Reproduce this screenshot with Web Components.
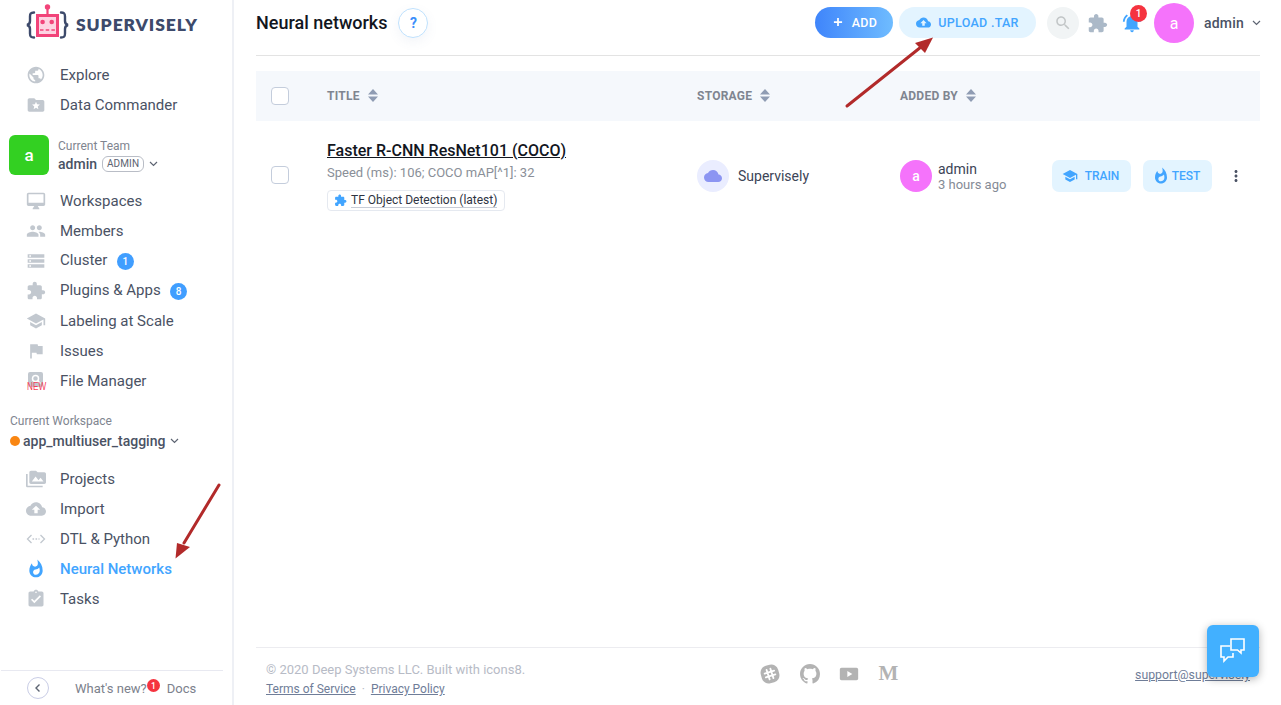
<!DOCTYPE html>
<html>
<head>
<meta charset="utf-8">
<title>Neural networks</title>
<style>
  html, body { margin: 0; height: 100%; overflow: hidden; background: #fff; font-family: Roboto, "Liberation Sans", sans-serif; }
</style>
</head>
<body>
<sb-app></sb-app>
<script>
const ICONS = {
  globe: "M12 2C6.48 2 2 6.48 2 12s4.48 10 10 10 10-4.48 10-10S17.52 2 12 2zm-1 17.93c-3.95-.49-7-3.85-7-7.93 0-.62.08-1.21.21-1.79L9 15v1c0 1.1.9 2 2 2v1.93zm6.9-2.54c-.26-.81-1-1.39-1.9-1.39h-1v-3c0-.55-.45-1-1-1H8v-2h2c.55 0 1-.45 1-1V7h2c1.1 0 2-.9 2-2v-.41c2.93 1.19 5 4.06 5 7.41 0 2.08-.8 3.97-2.1 5.39z",
  folder: "M20 6h-8l-2-2H4c-1.1 0-1.99.9-1.99 2L2 18c0 1.1.9 2 2 2h16c1.1 0 2-.9 2-2V8c0-1.1-.9-2-2-2zm-5.1 11L12 15.3 9.1 17l.8-3.3-2.6-2.2 3.4-.3L12 8l1.3 3.2 3.4.3-2.6 2.2.8 3.3z",
  desktop: "M21 2H3c-1.1 0-2 .9-2 2v12c0 1.1.9 2 2 2h7l-2 3v1h8v-1l-2-3h7c1.1 0 2-.9 2-2V4c0-1.1-.9-2-2-2zm0 12H3V4h18v10z",
  people: "M16 11c1.66 0 2.99-1.34 2.99-3S17.66 5 16 5c-1.66 0-3 1.34-3 3s1.34 3 3 3zm-8 0c1.66 0 2.99-1.34 2.99-3S9.66 5 8 5C6.34 5 5 6.34 5 8s1.34 3 3 3zm0 2c-2.33 0-7 1.17-7 3.5V19h14v-2.5c0-2.33-4.67-3.5-7-3.5zm8 0c-.29 0-.62.02-.97.05 1.16.84 1.97 1.97 1.97 3.45V19h6v-2.5c0-2.33-4.67-3.5-7-3.5z",
  storage: "M2 4h20v4H2zM2 10h20v4H2zM2 16h20v4H2zM4 5.2v1.6h2V5.2zM4 11.2v1.6h2v-1.6zM4 17.2v1.6h2v-1.6z",
  puzzle: "M20.5 11H19V7c0-1.1-.9-2-2-2h-4V3.5C13 2.12 11.88 1 10.5 1S8 2.12 8 3.5V5H4c-1.1 0-1.99.9-1.99 2v3.8H3.5c1.49 0 2.7 1.21 2.7 2.7s-1.21 2.7-2.7 2.7H2V20c0 1.1.9 2 2 2h3.8v-1.5c0-1.49 1.21-2.7 2.7-2.7 1.49 0 2.7 1.21 2.7 2.7V22H17c1.1 0 2-.9 2-2v-4h1.5c1.38 0 2.5-1.12 2.5-2.5S21.88 11 20.5 11z",
  school: "M5 13.18v4L12 21l7-3.82v-4L12 17l-7-3.82zM12 3L1 9l11 6 9-4.91V17h2V9L12 3z",
  flag: "M14.4 6L14 4H5v17h2v-7h5.6l.4 2h7V6z",
  media: "M2 6H0v5h.01L0 20c0 1.1.9 2 2 2h18v-2H2V6zm20-2h-8l-2-2H6c-1.1 0-1.99.9-1.99 2L4 16c0 1.1.9 2 2 2h16c1.1 0 2-.9 2-2V6c0-1.1-.9-2-2-2zM7 15l4.5-6 3.5 4.51 2.5-3.01L21 15H7z",
  upload: "M19.35 10.04C18.67 6.59 15.64 4 12 4 9.11 4 6.6 5.64 5.35 8.04 2.34 8.36 0 10.91 0 14c0 3.31 2.69 6 6 6h13c2.76 0 5-2.24 5-5 0-2.64-2.05-4.78-4.65-4.96zM14 13v4h-4v-4H7l5-5 5 5h-3z",
  cloud: "M19.35 10.04C18.67 6.59 15.64 4 12 4 9.11 4 6.6 5.64 5.35 8.04 2.34 8.36 0 10.91 0 14c0 3.31 2.69 6 6 6h13c2.76 0 5-2.24 5-5 0-2.64-2.05-4.78-4.65-4.96z",
  fire: "M13.5.67s.74 2.65.74 4.8c0 2.06-1.35 3.73-3.41 3.73-2.07 0-3.63-1.67-3.63-3.73l.03-.36C5.21 7.51 4 10.62 4 14c0 4.42 3.58 8 8 8s8-3.58 8-8C20 8.61 17.41 3.8 13.5.67zM11.71 19c-1.78 0-3.22-1.4-3.22-3.14 0-1.62 1.05-2.76 2.81-3.12 1.77-.36 3.6-1.21 4.62-2.58.39 1.29.59 2.65.59 4.04 0 2.65-2.15 4.8-4.8 4.8z",
  tasks: "M19 3h-4.18C14.4 1.84 13.3 1 12 1c-1.3 0-2.4.84-2.82 2H5c-1.1 0-2 .9-2 2v14c0 1.1.9 2 2 2h14c1.1 0 2-.9 2-2V5c0-1.1-.9-2-2-2zm-7 0c.55 0 1 .45 1 1s-.45 1-1 1-1-.45-1-1 .45-1 1-1zm-2 14l-4-4 1.41-1.41L10 14.17l6.59-6.59L18 9l-8 8z",
  bell: "M7.58 4.08L6.15 2.65C3.75 4.48 2.17 7.3 2.03 10.5h2c.15-2.65 1.51-4.97 3.55-6.42zm12.39 6.42h2c-.15-3.2-1.73-6.02-4.12-7.85l-1.42 1.43c2.02 1.45 3.39 3.77 3.54 6.42zM18 11c0-3.07-1.64-5.64-4.5-6.32V4c0-.83-.67-1.5-1.5-1.5s-1.5.67-1.5 1.5v.68C7.63 5.36 6 7.92 6 11v5l-2 2v1h16v-1l-2-2v-5zm-6 11c.14 0 .27-.01.4-.04.65-.14 1.18-.58 1.44-1.18.1-.24.15-.5.15-.78h-4c.01 1.1.9 2 2.01 2z",
  search: "M15.5 14h-.79l-.28-.27C15.41 12.59 16 11.11 16 9.5 16 5.91 13.09 3 9.5 3S3 5.91 3 9.5 5.91 16 9.5 16c1.61 0 3.09-.59 4.23-1.57l.27.28v.79l5 4.99L20.49 19l-4.99-5zm-6 0C7.01 14 5 11.99 5 9.5S7.01 5 9.5 5 14 7.01 14 9.5 11.99 14 9.5 14z",
  plus: "M19 13.5h-5.5V19h-3v-5.5H5v-3h5.5V5h3v5.5H19z",
  more: "M12 8c1.1 0 2-.9 2-2s-.9-2-2-2-2 .9-2 2 .9 2 2 2zm0 2c-1.1 0-2 .9-2 2s.9 2 2 2 2-.9 2-2-.9-2-2-2zm0 6c-1.1 0-2 .9-2 2s.9 2 2 2 2-.9 2-2-.9-2-2-2z",
  youtube: "M21 4.5H3c-1.1 0-2 .9-2 2v11c0 1.1.9 2 2 2h18c1.1 0 2-.9 2-2v-11c0-1.1-.9-2-2-2zM10 15.5v-7l6 3.5z"
};

// small wrapper so the svg markup is not repeated everywhere
class SbIcon extends HTMLElement {
  connectedCallback() {
    const size = this.getAttribute("size") || 20;
    const color = this.getAttribute("color") || "#c2c8cf";
    const name = this.getAttribute("name");
    this.attachShadow({ mode: "open" }).innerHTML = `<style>
      :host { display: inline-flex; width: ${size}px; height: ${size}px; flex: none; }
      svg { width: 100%; height: 100%; display: block; }
    </style>
    <svg viewBox="0 0 24 24"><path fill="${color}" fill-rule="evenodd" d="${ICONS[name]}"/></svg>`;
  }
}
customElements.define("sb-icon", SbIcon);

class SbLogo extends HTMLElement {
  constructor() {
    super();
    this.attachShadow({ mode: "open" }).innerHTML = `<style>
      :host { display: flex; align-items: center; height: 60px; padding-left: 25px; box-sizing: border-box; padding-bottom: 14px; }
      svg { width: 44px; height: 42px; flex: none; }
      span { font: 800 17.5px Lato, sans-serif; color: #3d4a6b; letter-spacing: .9px; margin-left: 7px; padding-top: 2px; }
    </style>
    <svg viewBox="0 0 44 42">
      <g fill="none" stroke="#3d4a6b" stroke-width="2.4" stroke-linecap="round">
        <path d="M9 10.5c-3.500 0-4 1.500-4 4v4.500c0 2-1 3.500-3 4 2 .5 3 2 3 4v4.500c0 2.500.5 4 4 4"/>
        <path d="M36 10.5c3.500 0 4 1.500 4 4v4.500c0 2 1 3.500 3 4-2 .5-3 2-3 4v4.500c0 2.500-.5 4-4 4"/>
      </g>
      <g fill="none" stroke="#f2447a" stroke-width="3">
        <rect x="12.500" y="13.500" width="20" height="20" fill="#fdd3e2"/>
        <path d="M22.500 5v8" stroke-width="2.200"/>
      </g>
      <circle cx="22.500" cy="5" r="2.700" fill="#f2447a"/>
      <circle cx="17.600" cy="20" r="2.300" fill="#f2447a"/>
      <circle cx="26.700" cy="20" r="2.300" fill="#f2447a"/>
      <path d="M15 28h15" stroke="#f2447a" stroke-width="1.600" stroke-dasharray="3.500 2.200" fill="none"/>
    </svg>
    <span>SUPERVISELY</span>`;
  }
}
customElements.define("sb-logo", SbLogo);

class SbNavItem extends HTMLElement {
  constructor() {
    super();
    this.attachShadow({ mode: "open" }).innerHTML = `<style>
      :host { display: flex; align-items: center; height: 30px; padding-left: 26px; font-size: 15px; color: #4a5264; }
      :host([active]) { color: #42a5ff; font-weight: 500; }
      :host([lift]) .label { padding-bottom: 2px; }
      .icon { width: 20px; height: 20px; margin-right: 14px; position: relative; display: flex; }
      .label { display: flex; align-items: center; gap: 9.500px; white-space: nowrap; }
      ::slotted(sb-count) { position: relative; top: 1px; }
    </style>
    <span class="icon"><slot name="icon"></slot></span>
    <span class="label"><slot></slot></span>`;
  }
}
customElements.define("sb-nav-item", SbNavItem);

class SbCount extends HTMLElement {
  constructor() {
    super();
    this.attachShadow({ mode: "open" }).innerHTML = `<style>
      :host { display: inline-flex; align-items: center; justify-content: center; width: 17px; height: 17px; border-radius: 50%;
        background: var(--bg, #409eff); color: #fff; font: 500 10px Roboto, sans-serif; }
    </style><slot></slot>`;
  }
}
customElements.define("sb-count", SbCount);

class SbAvatar extends HTMLElement {
  connectedCallback() {
    const size = this.getAttribute("size") || 32;
    const fs = this.getAttribute("fs") || 14;
    const bg = this.getAttribute("bg") || "#f573fb";
    const radius = this.getAttribute("radius") || "50%";
    this.attachShadow({ mode: "open" }).innerHTML = `<style>
      :host { display: flex; align-items: center; justify-content: center; flex: none; width: ${size}px; height: ${size}px;
        border-radius: ${radius}; background: ${bg}; color: #fff; font-size: ${fs}px; font-weight: 500; }
    </style><slot></slot>`;
  }
}
customElements.define("sb-avatar", SbAvatar);

class SbSidebar extends HTMLElement {
  constructor() {
    super();
    this.attachShadow({ mode: "open" }).innerHTML = `<style>
      :host { display: flex; flex-direction: column; width: 234px; height: 705px; flex: none; box-sizing: border-box;
        border-right: 2px solid #eef0f5; }
      .team { display: flex; margin: 15px 0 11px 9px; gap: 9px; height: 40px; }
      .team small, .ws small { display: block; font-size: 12px; color: #80858f; line-height: 14px; }
      .team small { margin-top: 4px; }
      .team b { font-size: 14px; font-weight: 500; color: #4a5264; }
      .team .row { display: flex; align-items: center; height: 21px; }
      .role { font-size: 10px; color: #5d6472; border: 1px solid #b9bdc6; border-radius: 6px; padding: 0 4px; margin-left: 5px; height: 14px; line-height: 14px; letter-spacing: .1px; }
      .chev { width: 9px; height: 6px; margin-left: 5px; }
      .ws { padding: 18px 0 0 10px; height: 68px; box-sizing: border-box; }
      .ws .row { display: flex; align-items: center; margin-top: 3px; font-size: 14px; font-weight: 500; color: #4a5264; height: 20px; }
      .dot { width: 10px; height: 10px; border-radius: 50%; background: #f98612; margin-right: 3px; }
      .spacer { flex: 1; }
      .bottom { display: flex; align-items: center; height: 35px; margin: 0 9px 0 1px; border-top: 1px solid #e8e9f1; font-size: 13px; color: #7c818c; box-sizing: border-box; position: relative; }
      .back { width: 20px; height: 20px; border: 1px solid #c9cde6; border-radius: 50%; margin-left: 26px; display: flex; align-items: center; justify-content: center; }
      .new { margin-left: 26px; }
      .docs { margin-left: 20px; }
      .notif { position: absolute; left: 146px; top: 8px; --bg: #f5333f; width: 13px; height: 13px; font-size: 8.500px; }
      .tag { position: absolute; left: 1px; top: 10px; font: 400 10px "Liberation Sans", sans-serif; color: #f5405a; transform: scaleX(.82); transform-origin: left; }
    </style>
    <sb-logo></sb-logo>
    <sb-nav-item><sb-icon slot="icon" name="globe"></sb-icon>Explore</sb-nav-item>
    <sb-nav-item><sb-icon slot="icon" name="folder"></sb-icon>Data Commander</sb-nav-item>
    <div class="team">
      <sb-avatar size="40" fs="17" bg="#33d022" radius="6px">a</sb-avatar>
      <div>
        <small>Current Team</small>
        <div class="row"><b>admin</b><span class="role">ADMIN</span>
          <svg class="chev" viewBox="0 0 9 6"><path d="M1 1l3.500 3.500L8 1" fill="none" stroke="#5d6472" stroke-width="1.200"/></svg></div>
      </div>
    </div>
    <sb-nav-item><sb-icon slot="icon" name="desktop"></sb-icon>Workspaces</sb-nav-item>
    <sb-nav-item><sb-icon slot="icon" name="people"></sb-icon>Members</sb-nav-item>
    <sb-nav-item lift><sb-icon slot="icon" name="storage"></sb-icon>Cluster <sb-count>1</sb-count></sb-nav-item>
    <sb-nav-item lift><sb-icon slot="icon" name="puzzle"></sb-icon>Plugins &amp; Apps <sb-count>8</sb-count></sb-nav-item>
    <sb-nav-item><sb-icon slot="icon" name="school"></sb-icon>Labeling at Scale</sb-nav-item>
    <sb-nav-item><sb-icon slot="icon" name="flag"></sb-icon>Issues</sb-nav-item>
    <sb-nav-item><span slot="icon" style="position:relative;display:flex">
        <svg width="20" height="20" viewBox="0 0 20 20"><rect x="2" y="1" width="15" height="15" rx="2" fill="#c2c8cf"/><circle cx="9.500" cy="7.500" r="3" fill="none" stroke="#fff" stroke-width="1.500"/><path d="M11.500 9.500l3 3" stroke="#fff" stroke-width="1.500"/></svg>
        <span class="tag">NEW</span>
      </span>File Manager</sb-nav-item>
    <div class="ws">
      <small>Current Workspace</small>
      <div class="row"><span class="dot"></span>app_multiuser_tagging
        <svg class="chev" viewBox="0 0 9 6"><path d="M1 1l3.500 3.500L8 1" fill="none" stroke="#5d6472" stroke-width="1.200"/></svg></div>
    </div>
    <sb-nav-item><sb-icon slot="icon" name="media"></sb-icon>Projects</sb-nav-item>
    <sb-nav-item><sb-icon slot="icon" name="upload"></sb-icon>Import</sb-nav-item>
    <sb-nav-item><span slot="icon" style="display:flex"><svg width="20" height="20" viewBox="0 0 20 20" fill="none" stroke="#c2c8cf" stroke-width="1.300"><path d="M5.500 6l-4 4 4 4M14.500 6l4 4-4 4"/><path d="M6.500 10h7" stroke-width="1.600" stroke-dasharray="1.600 1.400"/></svg></span>DTL &amp; Python</sb-nav-item>
    <sb-nav-item active><sb-icon slot="icon" name="fire" color="#42a5ff"></sb-icon>Neural Networks</sb-nav-item>
    <sb-nav-item><sb-icon slot="icon" name="tasks"></sb-icon>Tasks</sb-nav-item>
    <div class="spacer"></div>
    <div class="bottom">
      <span class="back"><svg width="8" height="10" viewBox="0 0 8 10"><path d="M5.500 1.500L2 5l3.500 3.500" fill="none" stroke="#5d6472" stroke-width="1.400"/></svg></span>
      <span class="new">What's new?</span>
      <sb-count class="notif">1</sb-count>
      <span class="docs">Docs</span>
    </div>`;
  }
}
customElements.define("sb-sidebar", SbSidebar);

class SbButton extends HTMLElement {
  connectedCallback() {
    this.attachShadow({ mode: "open" }).innerHTML = `<style>
      :host { display: inline-flex; align-items: center; justify-content: center; gap: 7px; box-sizing: border-box; height: 31px;
        font-size: 12.500px; font-weight: 500; letter-spacing: .3px; background: #e3f4ff; color: #42a5ff; border-radius: 16px; white-space: nowrap; }
      :host([primary]) { background: linear-gradient(90deg, #3f85fb, #6fbcff); color: #fff; }
      :host([square]) { border-radius: 7px; height: 32px; font-size: 12px; letter-spacing: 0; }
    </style><slot name="icon"></slot><slot></slot>`;
  }
}
customElements.define("sb-button", SbButton);

class SbTopbar extends HTMLElement {
  constructor() {
    super();
    this.attachShadow({ mode: "open" }).innerHTML = `<style>
      :host { display: flex; align-items: center; height: 56px; flex: none; box-sizing: border-box; border-bottom: 1px solid #e3e3e3; padding-bottom: 10px; }
      h1 { margin: 0; font-size: 18px; font-weight: 500; color: #12161e; }
      .help { width: 28px; height: 28px; margin-left: 11px; border-radius: 50%; border: 1px solid #bfe1fd; display: flex; align-items: center; justify-content: center;
        color: #3d8ffb; font-size: 14px; font-weight: 700; box-shadow: 0 4px 12px rgba(90,110,160,.08); }
      .spacer { flex: 1; }
      .add { width: 78px; margin-right: 6px; margin-bottom: 2px; }
      .upload { width: 137px; margin-bottom: 2px; }
      .search { width: 32px; height: 32px; border-radius: 50%; background: #f1f4f5; margin-left: 11px; display: flex; align-items: center; justify-content: center; }
      .puzzle { margin-left: 8px; }
      .bellwrap { margin-left: 13px; position: relative; display: flex; }
      .bellbadge { position: absolute; left: 9px; top: -7px; --bg: #f5333f; }
      .user { margin-left: 11px; font-weight: 400; }
      .name { font-size: 14px; font-weight: 500; color: #4a5264; margin-left: 10px; letter-spacing: .2px; }
      .chev { width: 9px; height: 6px; margin-left: 8px; }
      .right { display: flex; align-items: center; margin-top: 1px; margin-right: -1px; }
    </style>
    <h1>Neural networks</h1>
    <span class="help">?</span>
    <span class="spacer"></span>
    <div class="right">
      <sb-button class="add" primary><sb-icon slot="icon" name="plus" size="14" color="#fff"></sb-icon>ADD</sb-button>
      <sb-button class="upload"><sb-icon slot="icon" name="upload" size="15" color="#42a5ff"></sb-icon>UPLOAD .TAR</sb-button>
      <span class="search"><sb-icon name="search" size="18" color="#c2c6c7"></sb-icon></span>
      <sb-icon class="puzzle" name="puzzle" size="21" color="#abb9c8"></sb-icon>
      <span class="bellwrap"><sb-icon name="bell" size="22" color="#42a5ff"></sb-icon><sb-count class="bellbadge">1</sb-count></span>
      <sb-avatar class="user" size="40" fs="16">a</sb-avatar>
      <span class="name">admin</span>
      <svg class="chev" viewBox="0 0 9 6"><path d="M1 1l3.500 3.500L8 1" fill="none" stroke="#5d6472" stroke-width="1.200"/></svg>
    </div>`;
  }
}
customElements.define("sb-topbar", SbTopbar);

class SbCheck extends HTMLElement {
  constructor() {
    super();
    this.attachShadow({ mode: "open" }).innerHTML = `<style>
      :host { display: block; width: 18px; height: 18px; box-sizing: border-box; background: #fff; border: 1px solid #c4cddc; border-radius: 4px; }
    </style>`;
  }
}
customElements.define("sb-check", SbCheck);

class SbSortHead extends HTMLElement {
  constructor() {
    super();
    this.attachShadow({ mode: "open" }).innerHTML = `<style>
      :host { display: flex; align-items: center; gap: 8px; font-size: 12px; font-weight: 700; color: #7f8590; letter-spacing: .25px; margin-top: -1px; }
      svg { width: 10px; height: 13px; }
    </style><slot></slot>
    <svg viewBox="0 0 10 13"><path d="M5 0l5 5.500H0zM5 13L0 7.500h10z" fill="#8f9cb3"/></svg>`;
  }
}
customElements.define("sb-sort-head", SbSortHead);

class SbTable extends HTMLElement {
  constructor() {
    super();
    this.attachShadow({ mode: "open" }).innerHTML = `<style>
      :host { display: block; margin-top: 15px; }
      .row { display: grid; grid-template-columns: 71px 370px 203px 1fr; align-items: center; }
      .row > :first-child { margin-left: 15px; }
      .head { height: 50px; background: #f5f8fc; }
      .item { height: 111px; }
      .item > sb-check { margin-top: -3px; }
      .title { font-size: 16px; font-weight: 500; color: #12161e; text-decoration: underline; line-height: 20px; margin-top: -1px; }
      .meta { font-size: 13px; color: #8a8f98; line-height: 16px; margin-top: 4px; }
      .tag { display: inline-flex; align-items: center; gap: 4px; height: 21px; margin-top: 9px; padding: 0 7px 0 6px; box-sizing: border-box; border: 1px solid #e5e9f0; border-radius: 4px; font-size: 12px; color: #2e3442; }
      .tag span { border-bottom: 1px solid #c7ccd6; line-height: 14px; }
      .store { display: flex; align-items: center; gap: 9px; font-size: 14px; color: #3c4456; margin-top: -1px; }
      .storeicon { width: 32px; height: 32px; border-radius: 50%; background: #eaedff; display: flex; align-items: center; justify-content: center; }
      .by { display: flex; align-items: center; margin-top: -1px; }
      .who { margin-left: 6px; font-size: 14px; color: #3c4456; line-height: 15px; padding-top: 2px; }
      .who small { display: block; font-size: 13px; color: #858b96; }
      .actions { margin-left: auto; display: flex; align-items: center; gap: 12px; }
      .train { width: 79px; padding-right: 2px; }
      .test { width: 69px; gap: 2px; padding-right: 3px; }
      .more { margin-left: 3px; margin-right: 15px; }
    </style>
    <div class="row head">
      <sb-check></sb-check>
      <sb-sort-head>TITLE</sb-sort-head>
      <sb-sort-head>STORAGE</sb-sort-head>
      <sb-sort-head>ADDED BY</sb-sort-head>
    </div>
    <div class="row item">
      <sb-check></sb-check>
      <div>
        <div class="title">Faster R-CNN ResNet101 (COCO)</div>
        <div class="meta">Speed (ms): 106; COCO mAP[^1]: 32</div>
        <div class="tag"><sb-icon name="puzzle" size="13" color="#42a5ff"></sb-icon><span>TF Object Detection (latest)</span></div>
      </div>
      <div class="store"><span class="storeicon"><sb-icon name="cloud" size="18" color="#8c95f2"></sb-icon></span>Supervisely</div>
      <div class="by">
        <sb-avatar size="32">a</sb-avatar>
        <div class="who">admin<small>3 hours ago</small></div>
        <div class="actions">
          <sb-button class="train" square><sb-icon slot="icon" name="school" size="16" color="#42a5ff"></sb-icon>TRAIN</sb-button>
          <sb-button class="test" square><sb-icon slot="icon" name="fire" size="18" color="#42a5ff"></sb-icon>TEST</sb-button>
          <sb-icon class="more" name="more" size="18" color="#4a5264"></sb-icon>
        </div>
      </div>
    </div>`;
  }
}
customElements.define("sb-table", SbTable);

class SbFooter extends HTMLElement {
  constructor() {
    super();
    this.attachShadow({ mode: "open" }).innerHTML = `<style>
      :host { display: grid; grid-template-columns: 494px auto 1fr; height: 58px; flex: none; box-sizing: border-box; border-top: 1px solid #ececf0; padding: 13px 10px 0 10px; }
      .copy { font-size: 13px; color: #b7bbc6; line-height: 18px; }
      a { color: #6f7d98; text-decoration: underline; font-size: 12px; }
      .sep { color: #b7bbc6; margin: 0 6px; font-size: 12px; }
      .links { line-height: 20px; margin-top: -1px; }
      .social { display: flex; align-items: center; gap: 19.500px; height: 25px; }
      .social svg { display: block; }
      .m { font: 700 21px "Liberation Serif", serif; color: #b3b3b3; width: 20px; text-align: center; }
      .support { justify-self: end; align-self: start; margin-top: 7px; font-size: 12.300px; }
    </style>
    <div>
      <div class="copy">© 2020 Deep Systems LLC. Built with icons8.</div>
      <div class="links"><a>Terms of Service</a><span class="sep">·</span><a>Privacy Policy</a></div>
    </div>
    <div class="social">
      <svg width="20" height="20" viewBox="0 0 20 20"><rect x="1" y="1" width="18" height="18" rx="7" fill="#b3b3b3" transform="rotate(-15 10 10)"/><g stroke="#fff" stroke-width="1.800" stroke-linecap="round" transform="rotate(-18 10 10)"><path d="M8 5v10M12 5v10M5 8h10M5 12h10"/></g></svg>
      <svg width="20" height="20" viewBox="0 0 16 16"><path fill="#b3b3b3" d="M8 0C3.580 0 0 3.580 0 8c0 3.540 2.290 6.530 5.470 7.590.4.070.55-.17.55-.38 0-.19-.01-.82-.01-1.490-2.010.37-2.530-.49-2.690-.94-.09-.23-.48-.94-.82-1.130-.28-.15-.68-.52-.01-.53.630-.01 1.080.58 1.230.82.720 1.210 1.870.87 2.330.66.070-.52.280-.87.510-1.070-1.780-.2-3.640-.89-3.640-3.950 0-.87.310-1.590.820-2.150-.08-.2-.36-1.020.080-2.120 0 0 .67-.21 2.200.82.640-.18 1.320-.27 2-.27.680 0 1.360.090 2 .27 1.530-1.040 2.200-.82 2.200-.82.440 1.100.160 1.920.080 2.120.510.560.820 1.270.820 2.150 0 3.070-1.870 3.750-3.650 3.950.29.25.54.730.54 1.480 0 1.070-.01 1.930-.01 2.200 0 .21.15.46.55.38A8.013 8.013 0 0016 8c0-4.420-3.580-8-8-8z"/></svg>
      <sb-icon name="youtube" color="#b3b3b3"></sb-icon>
      <span class="m">M</span>
    </div>
    <a class="support">support@supervisely</a>`;
  }
}
customElements.define("sb-footer", SbFooter);

class SbChat extends HTMLElement {
  constructor() {
    super();
    this.attachShadow({ mode: "open" }).innerHTML = `<style>
      :host { position: absolute; left: 1207px; top: 625px; width: 52px; height: 52px; border-radius: 6px; background: #42b0ff; box-shadow: 0 2px 8px rgba(0,0,0,.3); display: flex; align-items: center; justify-content: center; }
    </style>
    <svg width="28" height="28" viewBox="0 0 28 28" fill="none" stroke="#fff" stroke-width="1.600">
      <path d="M12 2h13v11h-3v3l-3.500-3H12z"/>
      <path d="M11 9H2v11h3v4l4-4h5v-4"/>
    </svg>`;
  }
}
customElements.define("sb-chat", SbChat);

class SbApp extends HTMLElement {
  constructor() {
    super();
    this.attachShadow({ mode: "open" }).innerHTML = `<style>
      :host { display: flex; width: 1281px; height: 705px; position: relative; overflow: hidden; font-family: Roboto, "Liberation Sans", sans-serif; }
      main { flex: 1; display: flex; flex-direction: column; padding: 0 21px 0 22px; }
      .grow { flex: 1; }
      .arrows { position: absolute; left: 0; top: 0; width: 1281px; height: 705px; pointer-events: none; }
    </style>
    <sb-sidebar></sb-sidebar>
    <main>
      <sb-topbar></sb-topbar>
      <sb-table></sb-table>
      <div class="grow"></div>
      <sb-footer></sb-footer>
    </main>
    <svg class="arrows" viewBox="0 0 1281 705">
      <path d="M219 485L184 543" stroke="#b22a2a" stroke-width="3" stroke-linecap="round"/>
      <path d="M175.500 558.500L177 543 190 547z" fill="#b22a2a"/>
      <path d="M847 106L921 47" stroke="#b22a2a" stroke-width="3" stroke-linecap="round"/>
      <path d="M933 37.500L915 43 925 53z" fill="#b22a2a"/>
    </svg>
    <sb-chat></sb-chat>`;
  }
}
customElements.define("sb-app", SbApp);
</script>
</body>
</html>
